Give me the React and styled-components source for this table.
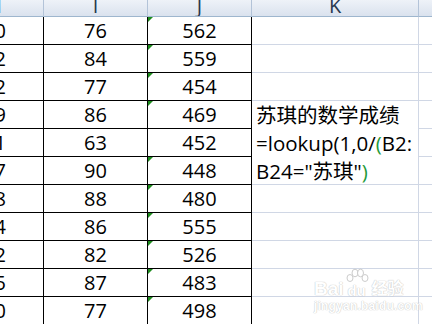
import React from "react";
import styled, { createGlobalStyle } from "styled-components";

const GlobalStyle = createGlobalStyle`
  html, body {
    margin: 0;
    padding: 0;
    background: #ffffff;
  }
  * {
    box-sizing: border-box;
  }
`;

const Page = styled.div`
  position: relative;
  width: 432px;
  height: 324px;
  overflow: hidden;
  background: #ffffff;
  font-family: "Open Sans", "Noto Sans CJK SC", sans-serif;
`;

// column H is only partly on screen, the sheet is scrolled to the right
const Sheet = styled.div`
  display: grid;
  grid-template-columns: 98px 104px 104px 167px 100px;
  grid-template-rows: 17px;
  grid-auto-rows: 28px;
  margin-left: -54px;
  width: max-content;
`;

const HeaderCell = styled.div`
  height: 17px;
  line-height: 11px;
  overflow: hidden;
  text-align: center;
  font-size: 20px;
  color: #27384f;
  background: linear-gradient(#eef2f8, #dae2ee);
  border-right: 1px solid #b3c3d8;
  border-bottom: 1px solid #9eb6ce;
`;

const Cell = styled.div`
  position: relative;
  display: flex;
  align-items: center;
  justify-content: ${(p) => (p.$left ? "flex-start" : "center")};
  padding-left: ${(p) => (p.$left ? "4px" : "0")};
  font-size: 20px;
  color: #000000;
  white-space: nowrap;
  border-right: 1px solid ${(p) => (p.$black ? "#000000" : "#d0d7e5")};
  border-bottom: 1px solid ${(p) => (p.$black ? "#000000" : "#d0d7e5")};
`;

// little green "number stored as text" marker
const Marker = styled.span`
  position: absolute;
  left: 0;
  top: 0;
  width: 0;
  height: 0;
  border-top: 5px solid #1e8c1e;
  border-right: 5px solid transparent;
`;

const EditBox = styled.div`
  grid-row: span 3;
  padding: 0 0 0 4px;
  font-size: 20.5px;
  line-height: 28px;
  color: #000000;
  background: #ffffff;
  border-right: 1px solid #d0d7e5;
  border-bottom: 1px solid #d0d7e5;
  white-space: nowrap;
`;

const Paren = styled.span`
  color: #1f9a3a;
`;

const Watermark = styled.div`
  position: absolute;
  left: 314px;
  top: 268px;
  display: flex;
  flex-direction: column;
  align-items: flex-start;
  color: #ffffff;
  font-family: "Liberation Sans", "Noto Sans CJK SC", sans-serif;
  font-weight: bold;
  text-shadow: 0 0 1px #b8b8b8, 0 0 1px #c8c8c8;
  opacity: 0.85;
`;

const LogoRow = styled.div`
  display: flex;
  align-items: flex-end;
  font-size: 19px;
  line-height: 20px;
  height: 31px;
`;

const Paw = styled.span`
  position: relative;
  display: inline-flex;
  flex-direction: column;
  align-items: center;
  width: 26px;
`;

const Du = styled.span`
  font-size: 15px;
  line-height: 17px;
`;

const Jing = styled.span`
  margin-left: 2px;
  font-size: 16px;
`;

const Site = styled.div`
  font-size: 12px;
  line-height: 14px;
  letter-spacing: 0.2px;
`;

const colH = [80, 72, 82, 79, 71, 77, 78, 84, 72, 75, 80];
const colI = [76, 84, 77, 86, 63, 90, 88, 86, 82, 87, 77];
const colJ = [562, 559, 454, 469, 452, 448, 480, 555, 526, 483, 498];

function App() {
  const rows = colI.map((v, i) => {
    const cells = [
      <Cell key={"h" + i} $black>
        {colH[i]}
      </Cell>,
      <Cell key={"i" + i} $black>
        {v}
      </Cell>,
      <Cell key={"j" + i} $black>
        {i !== 4 && <Marker />}
        {colJ[i]}
      </Cell>,
    ];
    if (i === 3) {
      cells.push(
        <EditBox key={"k" + i}>
          <div>苏琪的数学成绩</div>
          <div>
            =lookup(1,0/<Paren>(</Paren>B2:
          </div>
          <div>
            B24="苏琪"<Paren>)</Paren>
          </div>
        </EditBox>
      );
    } else if (i !== 4 && i !== 5) {
      cells.push(<Cell key={"k" + i} $left />);
    }
    cells.push(<Cell key={"l" + i} />);
    return cells;
  });

  return (
    <>
      <GlobalStyle />
      <Page>
        <Sheet>
          <HeaderCell>H</HeaderCell>
          <HeaderCell>I</HeaderCell>
          <HeaderCell>J</HeaderCell>
          <HeaderCell>K</HeaderCell>
          <HeaderCell>L</HeaderCell>
          {rows}
        </Sheet>
        <Watermark>
          <LogoRow>
            <span>Bai</span>
            <Paw>
              <svg width="24" height="14" viewBox="0 0 24 14">
                <g fill="#ffffff" stroke="#c4c4c4" strokeWidth="1">
                  <ellipse cx="5" cy="10" rx="3" ry="3.5" />
                  <ellipse cx="10" cy="5" rx="3" ry="3.8" />
                  <ellipse cx="15.5" cy="5" rx="3" ry="3.8" />
                  <ellipse cx="20" cy="10" rx="3" ry="3.5" />
                </g>
              </svg>
              <Du>du</Du>
            </Paw>
            <Jing>经验</Jing>
          </LogoRow>
          <Site>jingyan.baidu.com</Site>
        </Watermark>
      </Page>
    </>
  );
}

export default App;
